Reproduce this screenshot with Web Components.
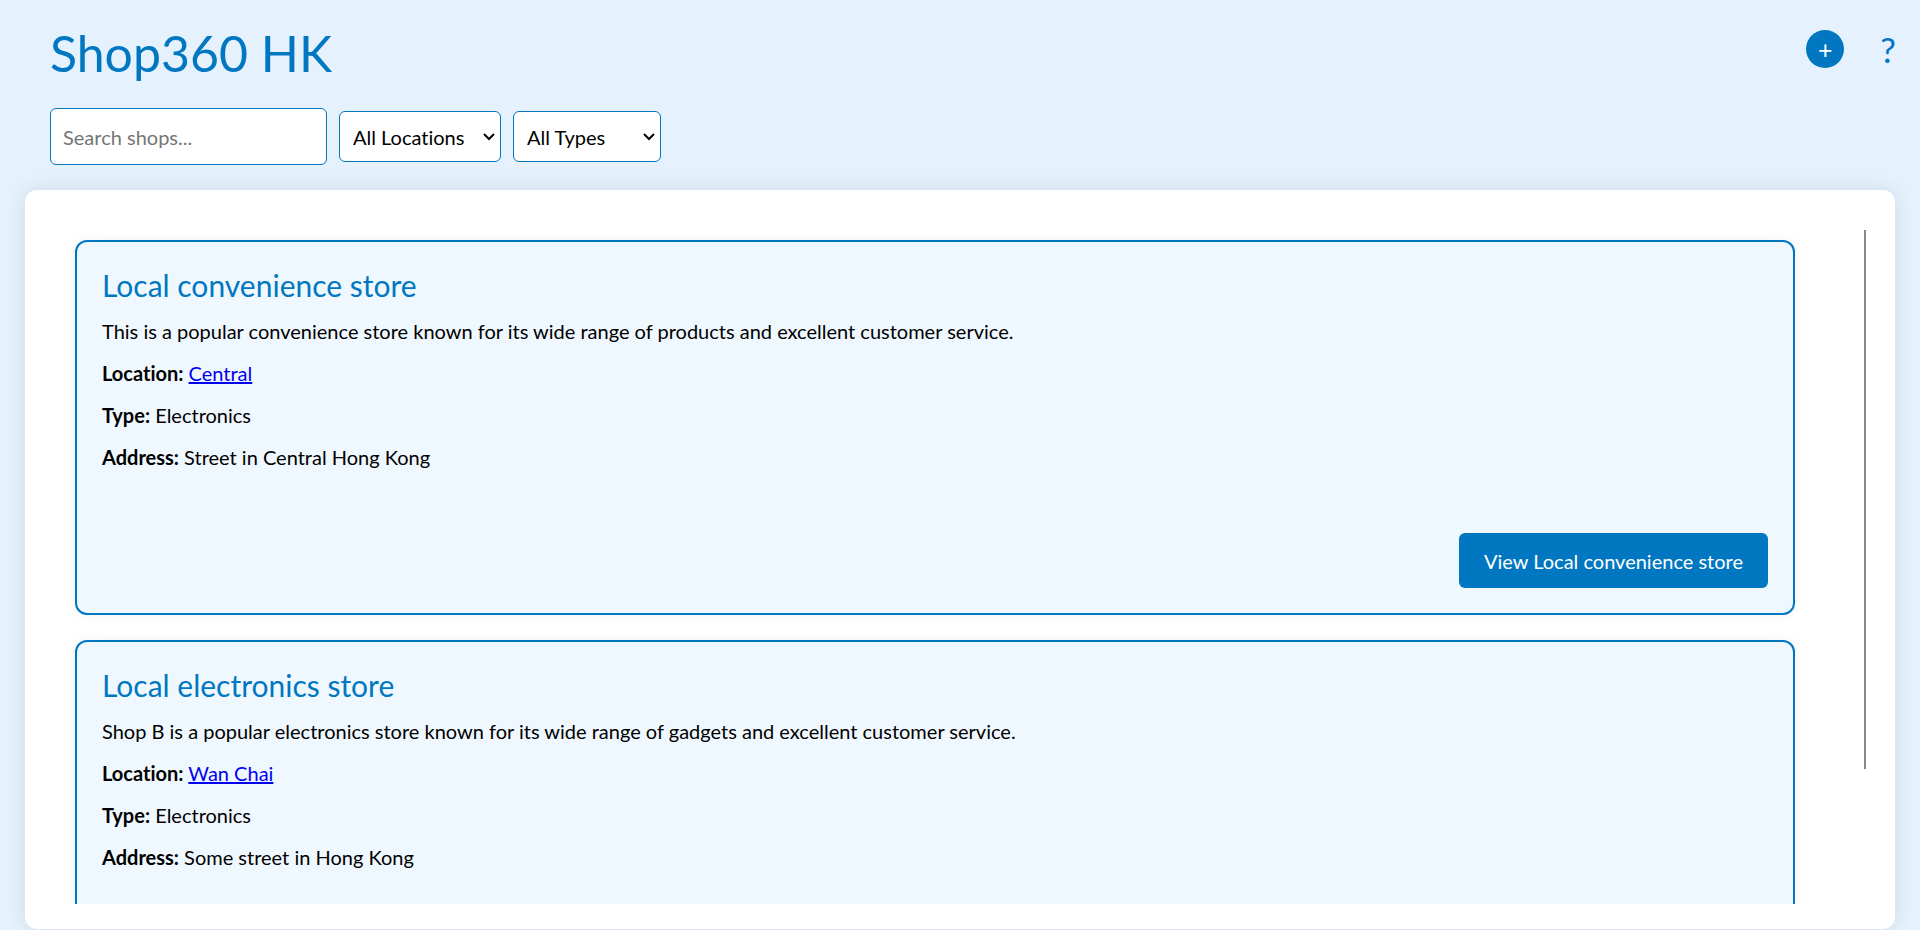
<!DOCTYPE html>
<html lang="en">
<head>
  <meta charset="utf-8">
  <title>Shop360 HK</title>
  <style>
    html {
      --main: #0077c0;
      --card: #f0f8ff;
    }

    body {
      margin: 0;
      height: 100vh;
      display: flex;
      flex-direction: column;
      background-color: #e5f1fd;
      color: black;
      font: 20px/24px Lato, sans-serif;
      font-variant-ligatures: none;
    }
  </style>
</head>
<body>

  <template id="shop-header">
    <style>
      :host {
        display: flex;
        justify-content: space-between;
        align-items: flex-start;
        padding: 23px 24px 25px 50px;
      }

      h1 {
        margin: 0 0 25px;
        color: var(--main);
        font-size: 50px;
        line-height: 60px;
        font-weight: 400;
      }

      nav {
        display: flex;
        align-items: center;
        gap: 36px;
        padding-top: 5px;
      }

      button {
        border: 0;
        padding: 0;
        background: none;
        color: var(--main);
        font-family: inherit;
        font-size: 35px;
        line-height: 42px;
        cursor: pointer;
      }

      .add {
        width: 38px;
        height: 38px;
        border-radius: 50%;
        background-color: var(--main);
        color: white;
        font-size: 25px;
        line-height: 38px;
      }
    </style>
    <div>
      <h1><slot name="title"></slot></h1>
      <slot></slot>
    </div>
    <nav>
      <button class="add" type="button" aria-label="Add a shop">+</button>
      <button type="button" aria-label="Help">?</button>
    </nav>
  </template>

  <template id="shop-filters">
    <style>
      :host {
        display: flex;
        flex-wrap: wrap;
        align-items: center;
        gap: 12px;
      }

      input, select {
        box-sizing: border-box;
        border: 1px solid var(--main);
        border-radius: 6px;
        background-color: white;
        color: black;
        font: inherit;
        font-variant-ligatures: none;
      }

      input {
        width: 277px;
        height: 57px;
        padding: 0 12px;
      }

      .select {
        display: grid;
        align-items: center;
      }

      .select > * {
        grid-area: 1 / 1;
      }

      .select svg {
        justify-self: end;
        margin-right: 6px;
        pointer-events: none;
      }

      select {
        appearance: none;
        height: 51px;
        padding: 0 13px;
      }

      #location {
        width: 162px;
      }

      #type {
        width: 148px;
      }
    </style>
    <input type="text" placeholder="Search shops..." aria-label="Search shops">
    <div class="select">
      <select id="location" aria-label="Location">
        <option>All Locations</option>
        <option>Central</option>
        <option>Wan Chai</option>
      </select>
      <svg width="12" height="8" viewBox="0 0 12 8"><path d="M1 1l5 5 5-5" fill="none" stroke="black" stroke-width="2"/></svg>
    </div>
    <div class="select">
      <select id="type" aria-label="Type">
        <option>All Types</option>
        <option>Electronics</option>
      </select>
      <svg width="12" height="8" viewBox="0 0 12 8"><path d="M1 1l5 5 5-5" fill="none" stroke="black" stroke-width="2"/></svg>
    </div>
  </template>

  <template id="shop-list">
    <style>
      :host {
        flex: 1;
        min-height: 0;
        display: flex;
        margin: 0 25px 1px;
        padding: 40px 29px 25px 25px;
        box-sizing: border-box;
        border-radius: 12px;
        background-color: white;
        box-shadow: 0 0 20px rgba(0, 0, 0, 0.1);
      }

      .scroller {
        flex: 1;
        display: flex;
        flex-direction: column;
        gap: 25px;
        padding: 10px 69px 56px 25px;
        overflow-y: auto;
        scrollbar-width: none;
      }

      .scroller ::slotted(*) {
        flex-shrink: 0;
      }

      .track {
        width: 2px;
      }

      .thumb {
        height: 80%;
        background-color: #888;
      }
    </style>
    <div class="scroller"><slot></slot></div>
    <div class="track"><div class="thumb"></div></div>
  </template>

  <template id="shop-card">
    <style>
      :host {
        display: flex;
        flex-direction: column;
        box-sizing: border-box;
        min-height: 375px;
        padding: 25px;
        border: 2px solid var(--main);
        border-radius: 12px;
        background-color: var(--card);
        box-shadow: 0 0 12px rgba(0, 0, 0, 0.06);
      }

      h2 {
        margin: 0 0 16px;
        color: var(--main);
        font-size: 30px;
        line-height: 36px;
        font-weight: 400;
      }

      p {
        margin: 0 0 18px;
      }

      a {
        color: #0000ee;
      }

      button {
        align-self: flex-end;
        margin-top: auto;
        height: 55px;
        padding: 0 25px;
        border: 0;
        border-radius: 6px;
        background-color: var(--main);
        color: white;
        font: inherit;
        cursor: pointer;
      }
    </style>
    <h2></h2>
    <p><slot></slot></p>
    <p><strong>Location:</strong> <a class="location" href="#"></a></p>
    <p><strong>Type:</strong> <span class="type"></span></p>
    <p><strong>Address:</strong> <span class="address"></span></p>
    <button type="button"></button>
  </template>

  <shop-header>
    <span slot="title">Shop360 HK</span>
    <shop-filters></shop-filters>
  </shop-header>

  <shop-list>
    <shop-card name="Local convenience store" location="Central" type="Electronics" address="Street in Central Hong Kong">This is a popular convenience store known for its wide range of products and excellent customer service.</shop-card>
    <shop-card name="Local electronics store" location="Wan Chai" type="Electronics" address="Some street in Hong Kong">Shop B is a popular electronics store known for its wide range of gadgets and excellent customer service.</shop-card>
  </shop-list>

<script>
  class ShopElement extends HTMLElement {
    constructor() {
      super();
      const template = document.getElementById(this.localName);
      this.attachShadow({mode: 'open'}).appendChild(
        template.content.cloneNode(true)
      );
    }
  }

  customElements.define('shop-header', class extends ShopElement {});
  customElements.define('shop-filters', class extends ShopElement {});

  customElements.define('shop-list', class extends ShopElement {
    connectedCallback() {
      // move the thin thumb along with the list
      const scroller = this.shadowRoot.querySelector('.scroller');
      const thumb = this.shadowRoot.querySelector('.thumb');
      scroller.addEventListener('scroll', () => {
        const room = scroller.scrollHeight - scroller.clientHeight;
        const free = scroller.clientHeight - thumb.offsetHeight;
        thumb.style.marginTop = (scroller.scrollTop / room * free) + 'px';
      });
    }
  });

  customElements.define('shop-card', class extends ShopElement {
    connectedCallback() {
      const root = this.shadowRoot;
      const name = this.getAttribute('name');
      root.querySelector('h2').textContent = name;
      root.querySelector('button').textContent = 'View ' + name;
      for (const key of ['location', 'type', 'address']) {
        root.querySelector('.' + key).textContent = this.getAttribute(key);
      }
    }
  });
</script>
</body>
</html>
